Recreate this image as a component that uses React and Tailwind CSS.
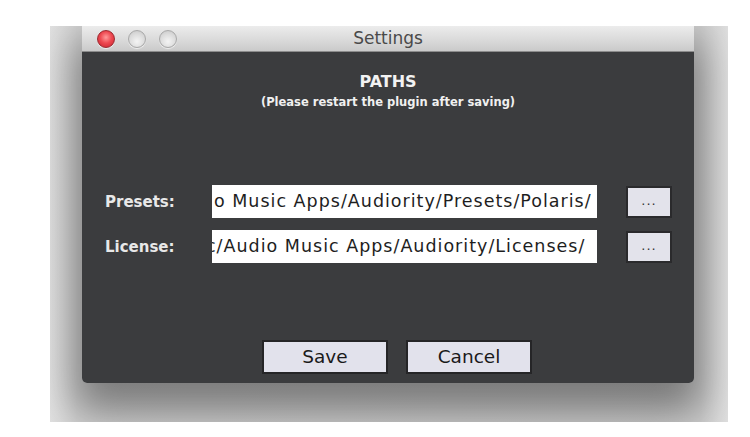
import React from "react";

const font = { fontFamily: '"DejaVu Sans", "Liberation Sans", sans-serif' };

function Light({ red }) {
  return red ? (
    <div className="h-[18px] w-[18px] rounded-full border border-[#9c2a30] bg-[radial-gradient(circle_at_50%_40%,#ff9a9a_0%,#ee4a52_45%,#c8202c_100%)] shadow-[0_1px_1px_rgba(255,255,255,0.7)]" />
  ) : (
    <div className="h-[18px] w-[18px] rounded-full border border-[#a9a9a9] bg-[radial-gradient(circle_at_50%_65%,#f4f4f4_0%,#dcdcdc_55%,#c4c4c4_100%)] shadow-[0_1px_1px_rgba(255,255,255,0.7)]" />
  );
}

function PathRow({ label, path, shift }) {
  return (
    <div className="flex items-center h-[33px]">
      <div className="w-[130px] pl-[23px] pt-[2px] text-[15px] font-bold text-[#e8e8e8] whitespace-nowrap">{label}</div>
      <div className="w-[385px] h-[33px] bg-white overflow-hidden flex items-center">
        <span
          className={
            "whitespace-nowrap text-[17.5px] tracking-[1px] text-[#1e1e1e] " +
            (shift ? "ml-[-6px]" : "ml-[2px]")
          }
        >
          {path}
        </span>
      </div>
      <div className="ml-[29px] w-[46px] h-[32px] bg-[#e3e3eb] border-2 border-[#2a2a2c] flex items-center justify-center text-[13px] tracking-[1px] text-[#333] pb-[2px]">
        ...
      </div>
    </div>
  );
}

function Btn({ children }) {
  return (
    <div className="w-[126px] h-[34px] bg-[#e2e2ec] border-2 border-[#252527] flex items-center justify-center text-[18.5px] text-[#1a1a1a]">
      {children}
    </div>
  );
}

export default function App() {
  return (
    <div className="w-[750px] h-[437px] bg-white overflow-hidden" style={font}>
      <div className="ml-[50px] mt-[26px] w-[678px] h-[396px] overflow-hidden bg-[linear-gradient(90deg,#e2e2e2_0%,#d4d4d4_4%,#cfcfcf_96%,#e0e0e0_100%)]">
        <div className="ml-[32px] w-[612px] h-[357px] rounded-b-[5px] shadow-[0_22px_40px_8px_rgba(0,0,0,0.42)] flex flex-col">
          <div className="h-[26px] shrink-0 bg-[linear-gradient(180deg,#ececec_0%,#dcdcdc_50%,#cacaca_100%)] border-b border-[#8c8c8c] flex items-center relative">
            <div className="flex items-center gap-[13px] pl-[15px]">
              <Light red />
              <Light />
              <Light />
            </div>
            <div className="absolute inset-0 flex items-center justify-center text-[17px] text-[#4a4a4a] pointer-events-none">
              Settings
            </div>
          </div>
          <div className="flex-1 bg-[#3b3c3e] rounded-b-[5px] flex flex-col">
            <div className="pt-[20px] text-center text-[16px] font-bold text-[#f2f2f2] leading-[19px]">PATHS</div>
            <div className="pt-[4px] text-center text-[11.5px] font-bold text-[#f0f0f0] leading-[14px]">
              (Please restart the plugin after saving)
            </div>
            <div className="mt-[76px] flex flex-col gap-[12px]">
              <PathRow label="Presets:" path="o Music Apps/Audiority/Presets/Polaris/" />
              <PathRow label="License:" path="c/Audio Music Apps/Audiority/Licenses/" shift />
            </div>
            <div className="mt-[77px] flex pl-[180px] gap-[18px]">
              <Btn>Save</Btn>
              <Btn>Cancel</Btn>
            </div>
          </div>
        </div>
      </div>
    </div>
  );
}
